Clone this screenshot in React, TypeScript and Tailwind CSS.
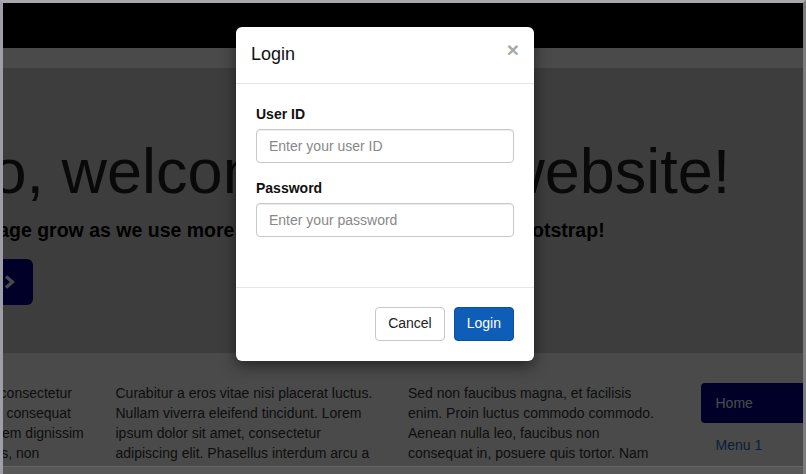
import React from "react";

const col1 = [
  "Lorem ipsum dolor sit amet, consectetur",
  "adipiscing elit. Vivamus nunc consequat",
  "et ac tincidunt augue, nec lorem dignissim",
  "Phasellus eu ligula mi tempus, non",
  "ultrices nibh. Donec sed odio dui.",
];
const col2 = [
  "Curabitur a eros vitae nisi placerat luctus.",
  "Nullam viverra eleifend tincidunt. Lorem",
  "ipsum dolor sit amet, consectetur",
  "adipiscing elit. Phasellus interdum arcu a",
  "nunc mollis, id aliquet est tincidunt.",
];
const col3 = [
  "Sed non faucibus magna, et facilisis",
  "enim. Proin luctus commodo commodo.",
  "Aenean nulla leo, faucibus non",
  "consequat in, posuere quis tortor. Nam",
  "pulvinar mauris eget lacus tincidunt.",
];

function TextCol({ lines }: { lines: string[] }) {
  return (
    <div className="w-[292.5px] shrink-0 px-[15px]">
      <p className="text-[14px] leading-[20px] text-[#333]">
        {lines.map((l, i) => (
          <span key={i} className="block whitespace-nowrap">
            {l}
          </span>
        ))}
      </p>
    </div>
  );
}

export default function App() {
  return (
    <div className="flex h-[474px] w-[806px] flex-col overflow-hidden border-l-[3px] border-r-[3px] border-t-[3px] border-l-[#9e9ea6] border-r-[#7c7c7c] border-t-[#a9a9ad] bg-white font-['Liberation_Sans',Arial,sans-serif]">
      <div className="relative flex-1 overflow-hidden bg-white">
        {/* page */}
        <div className="w-full">
          <div className="h-[45px] bg-black" />
          <div className="ml-[-195px] mt-[20px] w-[1170px] px-[15px]">
            <div className="rounded-[6px] bg-[#d2d2d2] px-[60px] pb-[48px] pt-[48px]">
              <h1 className="mb-[10px] mt-[21px] whitespace-nowrap text-[63px] font-normal leading-[1.1] text-[#222]">
                Hello, welcome to my website!
              </h1>
              <p className="mb-[15px] whitespace-nowrap text-[19.5px] font-bold leading-[28px] text-black">
                Watch this page grow as we use more and more features of Twitter Bootstrap!
              </p>
              <a className="inline-flex h-[46px] w-[150px] items-center justify-end gap-[6px] rounded-[6px] bg-[#00008a] pr-[18px] text-[18px] text-white">
                Learn more
                <svg width="12" height="14" viewBox="0 0 12 14" fill="none">
                  <polyline
                    points="3,1.5 9.5,7 3,12.5"
                    stroke="#ffffff"
                    strokeWidth="3.4"
                    strokeLinejoin="miter"
                  />
                </svg>
              </a>
            </div>
            <div className="-mx-[15px] mt-[30px] flex">
              <TextCol lines={col1} />
              <TextCol lines={col2} />
              <TextCol lines={col3} />
              <div className="w-[292.5px] shrink-0 px-[15px]">
                <ul className="flex flex-col gap-[2px] text-[14px] leading-[20px]">
                  <li className="rounded-[4px] bg-[#00008a] px-[15px] py-[10px] text-white">Home</li>
                  <li className="rounded-[4px] px-[15px] py-[10px] text-[#2f66b8]">Menu 1</li>
                  <li className="rounded-[4px] px-[15px] py-[10px] text-[#2f66b8]">Menu 2</li>
                </ul>
              </div>
            </div>
          </div>
        </div>

        {/* backdrop */}
        <div className="absolute inset-0 bg-[rgba(0,0,0,0.71)]" />

        {/* modal */}
        <div className="absolute left-[233px] top-[24px] w-[298px] rounded-[6px] bg-white shadow-[0_5px_15px_rgba(0,0,0,0.5)]">
          <div className="flex items-start justify-between border-b border-[#e5e5e5] p-[15px]">
            <h4 className="text-[18px] font-normal leading-[25.7px] text-[#111]">Login</h4>
            <button className="-mt-[3px] text-[21px] font-bold leading-none text-[#a8a8a8]">×</button>
          </div>
          <div className="flex flex-col gap-[15px] px-[20px] pb-[50px] pt-[20px]">
            <div>
              <label className="mb-[5px] block text-[14px] font-bold leading-[20px] text-[#111]">User ID</label>
              <input
                className="block h-[34px] w-full rounded-[4px] border border-[#c8c8c8] px-[12px] text-[14px] text-[#555] shadow-[inset_0_1px_1px_rgba(0,0,0,0.075)] placeholder:text-[#888] focus:outline-none"
                placeholder="Enter your user ID"
              />
            </div>
            <div>
              <label className="mb-[5px] block text-[14px] font-bold leading-[20px] text-[#111]">Password</label>
              <input
                type="password"
                className="block h-[34px] w-full rounded-[4px] border border-[#c8c8c8] px-[12px] text-[14px] text-[#555] shadow-[inset_0_1px_1px_rgba(0,0,0,0.075)] placeholder:text-[#888] focus:outline-none"
                placeholder="Enter your password"
              />
            </div>
          </div>
          <div className="flex justify-end gap-[9px] border-t border-[#e5e5e5] px-[20px] pb-[20px] pt-[19px]">
            <button className="h-[34px] rounded-[4px] border border-[#c8c8c8] bg-white px-[12px] text-[14px] text-[#222]">
              Cancel
            </button>
            <button className="h-[34px] rounded-[4px] border border-[#0b50a0] bg-[#0e5db6] px-[12px] text-[14px] text-white">
              Login
            </button>
          </div>
        </div>
      </div>
      <div className="h-[8px] shrink-0 border-t border-[#666] bg-[#585858]" />
    </div>
  );
}
